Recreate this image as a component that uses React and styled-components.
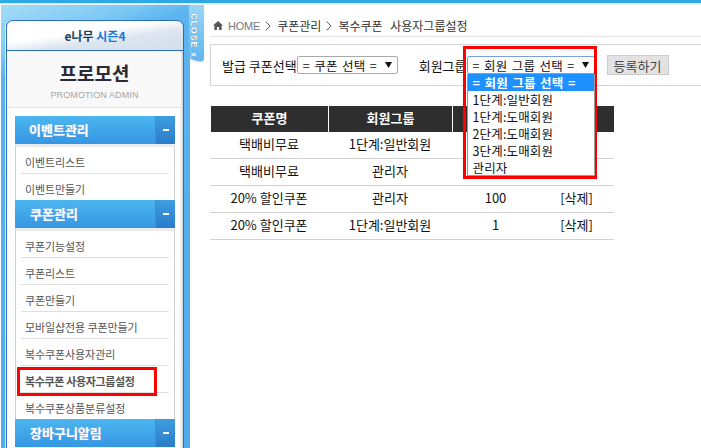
import React from "react";
import styled, { createGlobalStyle } from "styled-components";

const KR = `"Noto Sans CJK KR", "Liberation Sans", sans-serif`;

const Global = createGlobalStyle`
  html, body { margin: 0; padding: 0; background: #fff; overflow: hidden; }
  body { font-family: ${KR}; color: #111; }
  * { box-sizing: border-box; }
`;

const Page = styled.div`
  width: 701px;
  height: 448px;
  overflow: hidden;
  display: flex;
  flex-direction: column;
`;
const TopBar = styled.div`
  flex: none;
  height: 5px;
  background: linear-gradient(#2ea9e6 0 3px, #dfe3e6 3px, #f2f2f2 5px);
`;
const Body = styled.div`
  flex: 1;
  display: flex;
  min-height: 0;
`;
const Sidebar = styled.aside`
  position: relative;
  flex: none;
  width: 189px;
  margin-left: 1px;
  padding: 15px 6px 0 5px;
  background: linear-gradient(160deg, #a5dbf7 0, #7fcaf5 45px, #5ab4f0 70px, #4fabee 100%);
`;
const CloseTab = styled.div`
  position: absolute;
  left: calc(100% - 1px);
  top: 0;
  width: 15px;
  height: 56px;
  padding: 8px 6px 0 0;
  background: linear-gradient(#9ad6f6, #5db7ef);
  border-radius: 0 0 4px 12px / 0 0 3px 6px;
  box-shadow: 0 1px 1px #c5c5c5;
  color: #fff;
  font: bold 9px/9px "Liberation Sans", sans-serif;
  letter-spacing: 0.9px;
  writing-mode: vertical-rl;
  text-shadow: 0 0 1px #2f6f9f;
`;
const Card = styled.div`
  height: 100%;
  padding-left: 1px;
  background: #fff;
  border: solid #2a6cb8;
  border-width: 0 1px;
  box-shadow: inset -3px 0 2px -1px #d9d9d9, -1px 0 0 #dce8f0;
  position: relative;
  border-top-left-radius: 8px;
  border-top-right-radius: 8px;
`;
const Season = styled.div`
  height: 31px;
  margin: 0 -1px;
  margin-left: -2px;
  border: 1px solid #2a6cb8;
  border-radius: 7px 7px 0 0;
  background: linear-gradient(172deg, #fff 40%, #dde6f0 62%, #d2deea 100%);
  text-align: center;
  font-size: 12px;
  font-weight: 700;
  line-height: 30px;
  color: #1d3f66;
`;
const SeasonAccent = styled.span`
  color: #1b78d8;
`;
const Brand = styled.div`
  height: 57px;
  padding-top: 9px;
  border-bottom: 1px solid #e2e2e2;
  margin-right: 2px;
  text-align: center;
  background: repeating-conic-gradient(#f5f5f5 0 25%, #fcfcfc 0 50%) 0 0 / 4px 4px;
`;
const BrandTitle = styled.div`
  font-size: 19px;
  line-height: 25px;
  font-weight: 700;
  color: #2b2b38;
  height: 27px;
`;
const BrandSub = styled.div`
  font: 9px/12px "Liberation Sans", sans-serif;
  letter-spacing: 0.1px;
  color: #a5a5a5;
  margin-top: 2px;
`;
const Menu = styled.nav`
  margin: 8px 0 0 7px;
  width: 160px;
`;
const MenuHead = styled.div`
  height: 28px;
  display: flex;
  align-items: center;
  justify-content: space-between;
  padding-left: ${(p) => p.$indent}px;
  background: linear-gradient(#4cb6ef, #3696e3);
  color: #fff;
  font-size: 13px;
  font-weight: 700;
  text-shadow: 0 0 1px #b9b4f0;
`;
const HeadLabel = styled.span`
  margin-top: -2px;
`;
const Toggle = styled.span`
  width: 20px;
  height: 28px;
  display: flex;
  align-items: center;
  justify-content: center;
  background: linear-gradient(#3f9ee0, #2a7bc9);
  border-left: 1px solid #3a8fd8;
`;
const Minus = styled.i`
  display: block;
  width: 6px;
  height: 2px;
  background: #fff;
`;
const MenuList = styled.ul`
  list-style: none;
  margin: 0;
  padding: 0 5px;
  background: #fff;
  border: solid #cfcfcf;
  border-width: 0 1px;
  border-top: 3px solid #ececec;
`;
const MenuItem = styled.li`
  position: relative;
  height: 27px;
  padding-left: 4px;
  border-bottom: 1px solid #dfdfdf;
  color: #555;
  font-size: 11px;
  font-weight: ${(p) => (p.$active ? 700 : 400)};
  letter-spacing: ${(p) => (p.$active ? "-0.35px" : "-0.1px")};
  line-height: 31px;
  white-space: nowrap;
  &:last-child {
    height: 26px;
    border-bottom: 0;
  }
`;
const RedFrame = styled.span`
  position: absolute;
  pointer-events: none;
  border: 3px solid #fe0000;
  left: ${(p) => p.$l}px;
  top: ${(p) => p.$t}px;
  width: ${(p) => p.$w}px;
  height: ${(p) => p.$h}px;
`;
const Main = styled.main`
  flex: 1;
  min-width: 0;
  padding-left: 20px;
`;
const Crumbs = styled.div`
  height: 32px;
  padding: 10px 0 0 3px;
  display: flex;
  align-items: center;
  border-bottom: 1px solid #e3e3e3;
  font-size: 12px;
  word-spacing: 5px;
  color: #333;
  white-space: nowrap;
`;
const HomeLabel = styled.span`
  margin-left: 5px;
  font: 11px "Liberation Sans", sans-serif;
  letter-spacing: -0.2px;
  color: #777;
`;
const Chevron = styled.svg`
  width: 6px;
  height: 10px;
  margin: 0 6px 0 5px;
  flex: none;
`;
const FilterBox = styled.div`
  height: 42px;
  margin-top: 7px;
  padding-left: 11px;
  display: flex;
  align-items: center;
  border: solid #d5d5d5;
  border-width: 1px 0 1px 1px;
  font-size: 13px;
`;
const FieldLabel = styled.span`
  margin-left: ${(p) => p.$gap || 0}px;
  white-space: nowrap;
`;
const SelectBox = styled.div`
  position: relative;
  flex: none;
  height: 18px;
  width: ${(p) => p.$w}px;
  display: flex;
  align-items: center;
  justify-content: space-between;
  padding: 0 5px;
  border: 1px solid ${(p) => (p.$open ? "#7ba2d8" : "#a9a9a9")};
  border-radius: 2px;
  font-size: 12.5px;
  letter-spacing: 0.15px;
  word-spacing: 1.5px;
  background: #fff;
  white-space: nowrap;
`;
const Arrow = styled.svg`
  width: 7px;
  height: 6px;
  flex: none;
`;
const Dropdown = styled.ul`
  position: absolute;
  left: -1px;
  top: 17px;
  width: 128px;
  height: 102px;
  margin: 0;
  padding: 0;
  list-style: none;
  background: #fff;
  border: 1px solid #9a9a9a;
  border-top: 0;
  z-index: 2;
`;
const Option = styled.li`
  height: 17px;
  padding-left: 5px;
  line-height: 17px;
  font-size: 12.5px;
  letter-spacing: 0.15px;
  word-spacing: 1.5px;
  color: ${(p) => (p.$on ? "#fff" : "#111")};
  background: ${(p) => (p.$on ? "#1e90ff" : "transparent")};
  font-weight: ${(p) => (p.$on ? 700 : 400)};
`;
const SubmitButton = styled.button`
  flex: none;
  width: 62px;
  height: 20px;
  margin-left: 12px;
  padding: 0;
  border: 1px solid #cbcbcb;
  background: #e2e2e2;
  color: #444;
  font: 13px ${KR};
`;
const Table = styled.table`
  margin-top: 20px;
  width: 404px;
  table-layout: fixed;
  border-collapse: separate;
  border-spacing: 0;
  font-size: 13px;
`;
const HeadCell = styled.th`
  height: 26px;
  padding: 0 0 3px;
  background: #2e2e2e;
  border-left: 1px solid #fff;
  color: #fff;
  font-size: 13px;
  font-weight: 700;
  text-align: center;
`;
const Cell = styled.td`
  height: 27px;
  padding: 0 0 4px;
  border-bottom: 1px solid #d2d2d2;
  text-align: center;
  color: #111;
`;

const groups = ["1단계:일반회원", "1단계:도매회원", "2단계:도매회원", "3단계:도매회원", "관리자"];
const rows = [
  ["택배비무료", "1단계:일반회원", "", ""],
  ["택배비무료", "관리자", "", ""],
  ["20% 할인쿠폰", "관리자", "100", "[삭제]"],
  ["20% 할인쿠폰", "1단계:일반회원", "1", "[삭제]"],
];
const menus = [
  { title: "이벤트관리", indent: 14, items: ["이벤트리스트", "이벤트만들기"] },
  {
    title: "쿠폰관리",
    indent: 15,
    items: ["쿠폰기능설정", "쿠폰리스트", "쿠폰만들기", "모바일샵전용 쿠폰만들기", "복수쿠폰사용자관리", "복수쿠폰 사용자그룹설정", "복수쿠폰상품분류설정"],
  },
  { title: "장바구니알림", indent: 15, items: [] },
];
const ACTIVE = "복수쿠폰 사용자그룹설정";

const Caret = () => (
  <Arrow viewBox="0 0 7 6"><path d="M0 0h7L3.5 6z" fill="#111" /></Arrow>
);
const Sep = () => (
  <Chevron viewBox="0 0 6 10"><path d="M.7.6 5.2 5 .7 9.4" fill="none" stroke="#555" strokeWidth="1" /></Chevron>
);

export default function App() {
  return (
    <Page>
      <Global />
      <TopBar />
      <Body>
        <Sidebar>
          <CloseTab>CLOSE x</CloseTab>
          <Card>
            <Season>e나무 <SeasonAccent>시즌4</SeasonAccent></Season>
            <Brand>
              <BrandTitle>프로모션</BrandTitle>
              <BrandSub>PROMOTION ADMIN</BrandSub>
            </Brand>
            <Menu>
              {menus.map((m) => (
                <React.Fragment key={m.title}>
                  <MenuHead $indent={m.indent}>
                    <HeadLabel>{m.title}</HeadLabel>
                    <Toggle><Minus /></Toggle>
                  </MenuHead>
                  {m.items.length > 0 && (
                    <MenuList>
                      {m.items.map((it) => (
                        <MenuItem key={it} $active={it === ACTIVE}>
                          {it}
                          {it === ACTIVE && <RedFrame $l={-4} $t={1} $w={140} $h={29} />}
                        </MenuItem>
                      ))}
                    </MenuList>
                  )}
                </React.Fragment>
              ))}
            </Menu>
          </Card>
        </Sidebar>
        <Main>
          <Crumbs>
            <svg width="10" height="9" viewBox="0 0 10 9"><path d="M5 0 0 4.4h1.4V9h2.5V6h2.2v3h2.5V4.4H10z" fill="#555" /></svg>
            <HomeLabel>HOME</HomeLabel>
            <Sep />
            쿠폰관리
            <Sep />
            복수쿠폰 사용자그룹설정
          </Crumbs>
          <FilterBox>
            <FieldLabel>발급 쿠폰선택</FieldLabel>
            <SelectBox $w={101}>= 쿠폰 선택 =<Caret /></SelectBox>
            <FieldLabel $gap={21}>회원그룹</FieldLabel>
            <SelectBox $w={128} $open>
              = 회원 그룹 선택 =<Caret />
              <Dropdown>
                <Option $on>= 회원 그룹 선택 =</Option>
                {groups.map((g) => <Option key={g}>{g}</Option>)}
              </Dropdown>
              <RedFrame $l={-5} $t={-11} $w={134} $h={133} />
            </SelectBox>
            <SubmitButton>등록하기</SubmitButton>
          </FilterBox>
          <Table>
            <colgroup>
              <col width="118" /><col width="124" /><col width="87" /><col width="75" />
            </colgroup>
            <thead>
              <tr>
                <HeadCell>쿠폰명</HeadCell>
                <HeadCell>회원그룹</HeadCell>
                <HeadCell />
                <HeadCell />
              </tr>
            </thead>
            <tbody>
              {rows.map((r, i) => (
                <tr key={i}>
                  {r.map((c, j) => <Cell key={j}>{c}</Cell>)}
                </tr>
              ))}
            </tbody>
          </Table>
        </Main>
      </Body>
    </Page>
  );
}
